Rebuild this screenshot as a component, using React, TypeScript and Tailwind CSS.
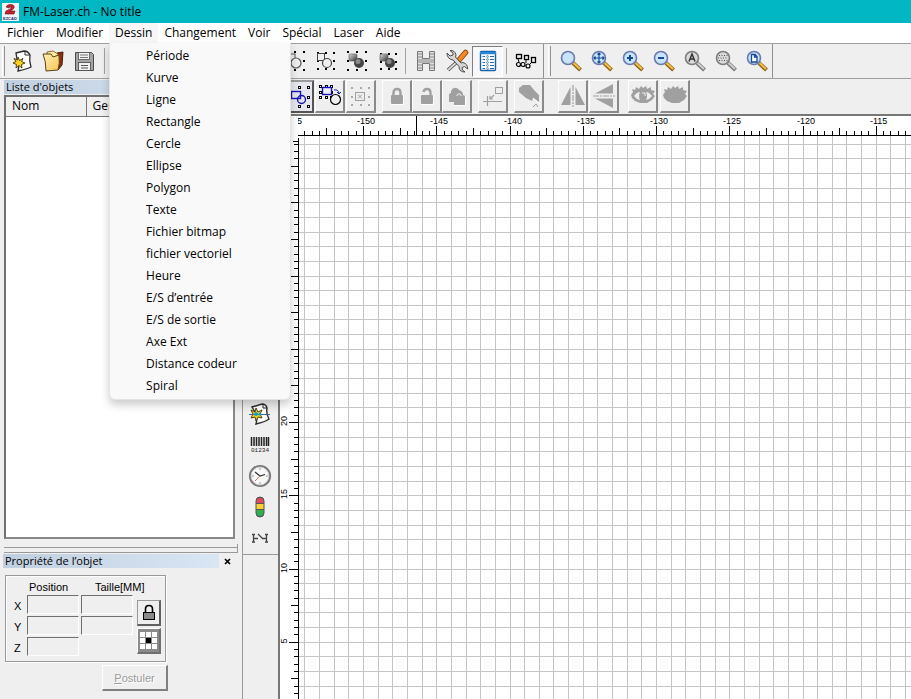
import React, { useEffect, useState } from 'react'

const menus = ['Fichier', 'Modifier', 'Dessin', 'Changement', 'Voir', 'Spécial', 'Laser', 'Aide']

const drawItems = [
  'Période', 'Kurve', 'Ligne', 'Rectangle', 'Cercle', 'Ellipse', 'Polygon', 'Texte',
  'Fichier bitmap', 'fichier vectoriel', 'Heure', 'E/S d’entrée', 'E/S de sortie',
  'Axe Ext', 'Distance codeur', 'Spiral',
]

type Kids = { children?: React.ReactNode }

function Icon({ children, size = 24 }: Kids & { size?: number }) {
  return (
    <svg width={size} height={size} viewBox={`0 0 ${size} ${size}`} fill="none" aria-hidden="true" className="shrink-0">
      {children}
    </svg>
  )
}

/* ---------- toolbar icons ---------- */

function NewIcon() {
  return (
    <Icon>
      <path d="M6 4 L14 2 Q18 2 20 6 Q19 12 21 18 Q17 20 8 22 Q10 15 7 10 Z" fill="#fff" stroke="#2b2b2b" strokeWidth="1.3" />
      <path d="M15 2 L15 6 L20 6" stroke="#2b2b2b" />
      <path d="M8 8 L9.500 11.500 L13 9.500 L11.500 12.500 L15 14 L11.500 15.500 L12 19 L9 16.500 L6 19 L6.500 15.500 L3 14 L6 12.500 L4 9.500 L7.500 11 Z" fill="#ffd21f" stroke="#40340a" strokeWidth="0.9" />
    </Icon>
  )
}

function FolderIcon() {
  return (
    <Icon>
      <defs>
        <linearGradient id="folder" x1="0" y1="0" x2="1" y2="1">
          <stop offset="0" stopColor="#fff0b8" />
          <stop offset="1" stopColor="#f5c455" />
        </linearGradient>
      </defs>
      <path d="M16 4 L22 3 L21 16 L17 21 Z" fill="#8a2f10" stroke="#4a1a08" />
      <path d="M6 3 L12 2 L17 5 L18 14 L16 20 L6 18 Z" fill="#ffe9a0" stroke="#6b4a10" strokeWidth="0.8" />
      <path d="M2 5 L10 5 L12 8 L18 6 Q19 15 17 21 L5 22 Q5 12 2 5 Z" fill="url(#folder)" stroke="#5b4313" />
    </Icon>
  )
}

function SaveIcon() {
  return (
    <Icon>
      <path d="M3.500 3.500 H19.500 L21.500 5.500 V21.500 H3.500 Z" fill="#a4a4a4" stroke="#4a4a4a" />
      <rect x="6.500" y="3.500" width="11" height="7" fill="#f3f3f3" stroke="#555" strokeWidth="0.8" />
      <path d="M8 6 H16 M8 8.500 H16" stroke="#777" />
      <rect x="6.500" y="13.500" width="12" height="8" fill="#f2f2f2" stroke="#444" strokeWidth="0.8" />
      <path d="M9 16.500 H16 M9 19 H16" stroke="#555" strokeWidth="1.2" />
    </Icon>
  )
}

function Dots({ color = '#000', a = 2, b = 20, hollow = false }: { color?: string; a?: number; b?: number; hollow?: boolean }) {
  const mid = Math.round((a + b) / 2)
  const spots = [[a, a], [mid, a], [b, a], [a, mid], [b, mid], [a, b], [mid, b], [b, b]]
  return (
    <>
      {spots.map(([x, y]) => (
        <g key={`${x}-${y}`}>
          <rect x={x} y={y} width={hollow ? 3 : 2} height={hollow ? 3 : 2} fill={color} />
          {hollow && <rect x={x + 1} y={y + 1} width="1" height="1" fill="#fff" />}
        </g>
      ))}
    </>
  )
}

function SelectIcon() {
  return (
    <Icon>
      <Dots a={2} b={20} />
      <rect x="4" y="5" width="8" height="7" stroke="#555" />
      <circle cx="13" cy="14" r="5" fill="#efefef" stroke="#555" strokeWidth="1.2" />
    </Icon>
  )
}

function GroupIcon() {
  return (
    <Icon>
      <Dots a={3} b={19} />
      <rect x="3.500" y="4.500" width="7" height="7" fill="#efefef" stroke="#444" />
      <circle cx="13" cy="14" r="4.500" fill="#efefef" stroke="#444" strokeWidth="1.2" />
    </Icon>
  )
}

function CombineIcon({ small = false }: { small?: boolean }) {
  return (
    <Icon>
      <defs>
        <linearGradient id="metal" x1="0" y1="0" x2="1" y2="1">
          <stop offset="0" stopColor="#ddd" />
          <stop offset="1" stopColor="#333" />
        </linearGradient>
      </defs>
      <Dots a={small ? 4 : 2} b={small ? 19 : 20} />
      <rect x="4" y="5" width="8" height="7" rx="1" fill="url(#metal)" stroke="#555" strokeWidth="0.6" />
      <circle cx="14" cy="14" r="5" fill="#444" />
      <circle cx="13" cy="12.500" r="2.500" fill="#8c8c8c" />
    </Icon>
  )
}

function HatchIcon() {
  return (
    <Icon>
      <path d="M3.500 2.500 H8.500 V9.500 H15.500 V2.500 H20.500 V21.500 H15.500 V14.500 H8.500 V21.500 H3.500 Z" fill="#e0e0e0" stroke="#777" />
      <path d="M4 5 H8 M4 8 H8 M4 11 H20 M4 13 H20 M4 16 H8 M4 19 H8 M16 5 H20 M16 8 H20 M16 16 H20 M16 19 H20" stroke="#888" />
    </Icon>
  )
}

function ToolsIcon() {
  return (
    <Icon>
      <path d="M3 21 L13 12" stroke="#444" strokeWidth="3.500" />
      <path d="M3 21 L13 12" stroke="#ddd" strokeWidth="1.800" />
      <path d="M14.500 10.500 L20.500 3.500" stroke="#8a3c00" strokeWidth="5.500" strokeLinecap="round" />
      <path d="M14.500 10.500 L20.500 3.500" stroke="#f08a24" strokeWidth="4" strokeLinecap="round" />
      <path d="M2 4 L5 7 L8 6 L8 4 L5 1.500 Q10 1 11 6 L10.500 8 L16 14 L18 13.500 Q23 15 22.500 20 L19.500 17.500 L17 18.500 L17.500 21 L20 23 Q14 23 14 17.500 L8 11 Q2 10 2 4 Z" fill="#d6d6d6" stroke="#3d3d3d" strokeWidth="0.9" />
    </Icon>
  )
}

function ListIcon() {
  return (
    <Icon>
      <rect x="4.500" y="2.500" width="15" height="19" rx="1" fill="#fff" stroke="#1462a8" strokeWidth="1.4" />
      <path d="M4 4 H20" stroke="#2a86d8" strokeWidth="2.500" />
      {[7, 10, 13, 16, 19].map((y) => (
        <g key={y}>
          <path d={`M6.500 ${y + 0.5} H9 M14 ${y + 0.5} H18`} stroke="#2468a8" />
          <circle cx="11.500" cy={y + 0.5} r="0.900" stroke="#2468a8" strokeWidth="0.7" />
        </g>
      ))}
    </Icon>
  )
}

function NodesIcon() {
  return (
    <Icon>
      <rect x="2.500" y="5.500" width="5" height="4" stroke="#000" strokeWidth="1.3" />
      <rect x="10.500" y="6.500" width="4" height="4" stroke="#000" strokeWidth="1.3" />
      <rect x="17.500" y="8.500" width="4" height="5" stroke="#000" strokeWidth="1.3" />
      <path d="M4 10 L5 13 M12 11 V14 M17 14 L15 16" stroke="#000" />
      <circle cx="4.500" cy="15.500" r="2" stroke="#000" strokeWidth="1.2" />
      <circle cx="9" cy="15.500" r="2" stroke="#000" strokeWidth="1.2" />
      <circle cx="14" cy="17" r="2" stroke="#000" strokeWidth="1.2" />
    </Icon>
  )
}

function Lens({ children, gray = false }: Kids & { gray?: boolean }) {
  return (
    <Icon>
      <path d="M14 14 L21.500 21" stroke={gray ? '#777' : '#8a6418'} strokeWidth="4" />
      <path d="M14.500 14 L21 20" stroke={gray ? '#cfcfcf' : '#f3c04a'} strokeWidth="2" />
      <circle cx="9" cy="9" r="6.500" fill={gray ? '#dadada' : '#c9e3fb'} stroke={gray ? '#7d7d7d' : '#6a7ab0'} strokeWidth="1.600" />
      {children}
    </Icon>
  )
}

/* ---------- icons of the second toolbar ---------- */

function FrameIcon() {
  return (
    <Icon>
      <Dots hollow a={1} b={20} />
      <rect x="4.500" y="6.500" width="9" height="7" stroke="#1414b4" strokeWidth="1.400" />
      <circle cx="14.500" cy="14.500" r="4" stroke="#1414b4" strokeWidth="1.400" />
    </Icon>
  )
}

function RotateFrameIcon() {
  return (
    <Icon>
      <Dots hollow a={1} b={12} />
      <rect x="4.500" y="3.500" width="9" height="7" fill="#efefef" stroke="#1414b4" strokeWidth="1.400" />
      <path d="M16 6 Q20 5 21 9 M19 8 L21 10 L23 8" stroke="#1414b4" />
      <circle cx="17.500" cy="15.500" r="5" fill="#efefef" stroke="#000" strokeWidth="1.200" />
    </Icon>
  )
}

function EraseFrameIcon() {
  return (
    <Icon>
      <g transform="translate(-1 0)">
        <Dots color="#a8a8a8" a={3} b={20} />
        <rect x="7.500" y="8.500" width="9" height="8" stroke="#a0a0a0" />
        <path d="M10 10.500 L14 14.500 M14 10.500 L10 14.500" stroke="#a0a0a0" />
      </g>
    </Icon>
  )
}

function GrayLock({ open = false }: { open?: boolean }) {
  return (
    <Icon>
      <rect x="6" y="11" width="12" height="9" rx="1" fill="#a0a0a0" />
      <path d={open ? 'M8.500 8 Q9 5 12 5 Q15.500 5 15.500 9 V12' : 'M8.500 12 V9 Q8.500 5 12 5 Q15.500 5 15.500 9 V12'} stroke="#a0a0a0" strokeWidth="2.400" />
      <path d="M18.500 11 V20.500 H6" stroke="#fff" />
    </Icon>
  )
}

function GrayLocks() {
  return (
    <Icon>
      <path d="M4 10 L6 9 V7 Q8 3 11 4 Q13 4 14 6 Q18 7 18 11 L20 12 V21 H9 V18 H4 Z" fill="#a0a0a0" />
      <path d="M12 12 V11 Q14 8 16 11 V12" stroke="#efefef" />
      <path d="M20.500 12 V21.500 H9" stroke="#fff" />
    </Icon>
  )
}

function OriginIcon() {
  return (
    <Icon>
      <rect x="14.500" y="3.500" width="7" height="6" stroke="#a0a0a0" />
      <path d="M2 17.500 H21 M6.500 12 V22 M13 11 L9 15 M9 12 V15 H12" stroke="#a0a0a0" strokeWidth="1.200" />
    </Icon>
  )
}

function PutIcon() {
  return (
    <Icon>
      <path d="M2 4 L6 1 H13 L17 6 L22 11 V18 L16 14 L15 17 L9 14 L2 8 Z" fill="#a0a0a0" />
      <path d="M16 14 L23 20" stroke="#fff" />
      <path d="M16 23 L19 20 L21 23" stroke="#a0a0a0" />
    </Icon>
  )
}

function MirrorIcon({ vertical = false }: { vertical?: boolean }) {
  return (
    <Icon>
      <g transform={vertical ? 'rotate(-90 12 12)' : undefined}>
        <path d="M9.500 3 V21 H0 Z M14.500 3 V21 H24 Z" fill="#a0a0a0" />
        <path d="M12 1 V23" stroke="#a0a0a0" strokeWidth="1.200" strokeDasharray="6 1 2 1" />
      </g>
    </Icon>
  )
}

function EyeIcon({ closed = false }: { closed?: boolean }) {
  return (
    <Icon>
      <path d="M0 11 L2 8 L1 5 L4 6 L5 3 L8 5 L10 2 L12 4 L15 2 L16 5 L20 3 L20 6 L24 7 L22 10 L24 12 L21 16 L16 19 L9 19 L4 17 L1 14 Z" fill="#a0a0a0" />
      {!closed && (
        <>
          <path d="M3 12 Q6 8 9 8 Q7 12 9 16 Q5 15 3 12 Z M21 12 Q18 8 15 8 Q17 12 15 16 Q19 15 21 12 Z" fill="#efefef" />
          <path d="M11 9 H14 V12" stroke="#efefef" />
        </>
      )}
    </Icon>
  )
}

/* ---------- side toolbar icons ---------- */

function VectorIcon() {
  return (
    <Icon>
      <path d="M4 5 L14 2 Q18 2 19 6 Q18 12 21 17 Q17 20 8 22 Q10 15 7 10 Z" fill="#fff" stroke="#2b2b2b" strokeWidth="1.400" />
      <path d="M15 2 L15 6 L19 6" stroke="#2b2b2b" />
      <path d="M8 6 L10 10 L14 8 L12 12 L14 16 L10 15 L8 19 L7 15 L3 16 L5 12 L3 8 L7 10 Z" fill="#ffd21f" stroke="#40340a" strokeWidth="0.900" />
      <path d="M1 12.500 H22" stroke="#3a6a90" />
      <circle cx="8" cy="12" r="2" fill="#1ca0b8" />
      <circle cx="12" cy="12" r="1.500" fill="#1ca0b8" />
    </Icon>
  )
}

function BarcodeIcon() {
  return (
    <Icon>
      <path d="M3.500 4 V13 M6 4 V13 M8.500 4 V13 M11 4 V13 M13.500 4 V13 M16 4 V13 M18.500 4 V13 M20.500 4 V13" stroke="#222" strokeWidth="1.500" />
      <text x="3" y="19" fontSize="6" fill="#222" fontFamily="Liberation Mono, monospace">01234</text>
    </Icon>
  )
}

function ClockIcon() {
  return (
    <Icon>
      <circle cx="12" cy="12" r="10" fill="#f8f8f8" stroke="#777" strokeWidth="2.200" />
      <circle cx="12" cy="12" r="9" stroke="#ccc" strokeWidth="0.800" />
      <path d="M7 8 L12 12 L17 10.500" stroke="#333" strokeWidth="1.200" />
      <path d="M12 12 L7 17" stroke="#e07070" />
      <path d="M12 4 V6 M12 18 V20 M4 12 H6 M18 12 H20" stroke="#999" />
    </Icon>
  )
}

function TrafficIcon() {
  return (
    <Icon>
      <rect x="8" y="2" width="8" height="20" rx="4" fill="#555" stroke="#555" />
      <path d="M8.500 8 V6 Q8.500 3 12 3 Q15.500 3 15.500 6 V8 Z" fill="#e0485c" />
      <rect x="8.500" y="9" width="7" height="5" fill="#fbd12e" />
      <path d="M8.500 15 V18 Q8.500 21 12 21 Q15.500 21 15.500 18 V15 Z" fill="#2fae52" />
    </Icon>
  )
}

function AxisIcon() {
  return (
    <Icon>
      <path d="M5.500 8 V16 M18.500 8 V16 M4 8.500 H7 M4 16 H7 M17 8.500 H20 M17 16 H20 M6 12.500 H10 M14 12.500 H18 M10 8 L15 13" stroke="#444" strokeWidth="1.300" />
    </Icon>
  )
}

/* ---------- toolbar parts ---------- */

function FlatButton({ label, active, children }: Kids & { label: string; active?: boolean }) {
  return (
    <button
      aria-label={label}
      className={
        active
          ? 'flex h-[31px] w-[31px] items-center justify-center border border-t-[#808080] border-l-[#808080] border-r-white border-b-white bg-[#f8f8f8]'
          : 'flex h-[31px] w-[31px] items-center justify-center'
      }
    >
      {children}
    </button>
  )
}

function RaisedButton({ label, pressed, children }: Kids & { label: string; pressed?: boolean }) {
  return (
    <button
      aria-label={label}
      className={
        pressed
          ? 'flex h-[33px] w-[30px] items-center justify-center border-2 border-t-[#9a9a9a] border-l-[#9a9a9a] border-r-[#555] border-b-[#555] bg-[#e6e6ee]'
          : 'flex h-[33px] w-[30px] items-center justify-center border-t border-l border-r-2 border-b-2 border-t-white border-l-white border-r-[#8a8a8a] border-b-[#8a8a8a]'
      }
    >
      {children}
    </button>
  )
}

function Grip() {
  return <div className="h-[30px] w-[3px] shrink-0 border-r border-l border-l-white border-r-[#909090]" />
}

function Divider() {
  return <div className="h-[26px] w-px shrink-0 bg-[#a0a0a0]" />
}

function MainToolbar() {
  return (
    <div role="toolbar" aria-label="Standard" className="flex h-9 shrink-0 items-center border-t border-b border-[#a0a0a0] bg-[#efefef]">
      <div className="flex items-center pl-[2px]">
        <Grip />
        <div className="flex items-center pl-px">
          <FlatButton label="Nouveau"><NewIcon /></FlatButton>
          <FlatButton label="Ouvrir"><FolderIcon /></FlatButton>
          <FlatButton label="Enregistrer"><SaveIcon /></FlatButton>
        </div>
      </div>
      <div className="flex w-[180px] items-center pl-[5px]"><Divider /></div>
      <div className="flex items-center">
        <FlatButton label="Sélection"><SelectIcon /></FlatButton>
        <FlatButton label="Grouper"><GroupIcon /></FlatButton>
        <FlatButton label="Combiner"><CombineIcon /></FlatButton>
        <FlatButton label="Union"><CombineIcon small /></FlatButton>
      </div>
      <div className="flex items-center pl-[2px]">
        <Divider />
        <div className="flex items-center pl-1">
          <FlatButton label="Hachure"><HatchIcon /></FlatButton>
          <FlatButton label="Paramètres"><ToolsIcon /></FlatButton>
          <FlatButton label="Liste d'objets" active><ListIcon /></FlatButton>
        </div>
      </div>
      <div className="flex items-center pl-[3px]">
        <Divider />
        <div className="flex items-center pl-[3px]">
          <FlatButton label="Noeuds"><NodesIcon /></FlatButton>
        </div>
      </div>
      <div className="flex h-full items-center gap-1 border-r border-[#909090] pl-[2px]">
        <div className="h-full w-px bg-[#909090]" />
        <Grip />
        <div className="flex items-center">
          <FlatButton label="Zoom fenêtre"><Lens /></FlatButton>
          <FlatButton label="Déplacer">
            <Lens><path d="M9 4 V14 M4 9 H14 M7.500 5.500 L9 4 L10.500 5.500 M7.500 12.500 L9 14 L10.500 12.500 M5.500 7.500 L4 9 L5.500 10.500 M12.500 7.500 L14 9 L12.500 10.500" stroke="#164a90" strokeWidth="1.200" /></Lens>
          </FlatButton>
          <FlatButton label="Zoom avant"><Lens><path d="M9 6 V12 M6 9 H12" stroke="#164a90" strokeWidth="2" /></Lens></FlatButton>
          <FlatButton label="Zoom arrière"><Lens><path d="M6 9 H12" stroke="#164a90" strokeWidth="2" /></Lens></FlatButton>
          <FlatButton label="Zoom tout"><Lens gray><path d="M6 12.500 L9 5 L12 12.500 M7 10 H11" stroke="#333" strokeWidth="1.500" /></Lens></FlatButton>
          <FlatButton label="Zoom sélection">
            <Lens gray><path d="M5 6.500 H14 M4 9 H14 M5 11.500 H14" stroke="#555" strokeDasharray="1 1.500" /></Lens>
          </FlatButton>
          <FlatButton label="Zoom page"><Lens><path d="M6.500 5.500 H10 L12 7.500 V13 H6.500 Z M9.500 5.500 V8 H12" fill="#fff" stroke="#164a90" strokeWidth="1.300" /></Lens></FlatButton>
        </div>
      </div>
    </div>
  )
}

function EditToolbar() {
  return (
    <div role="toolbar" aria-label="Édition" className="flex h-[37px] shrink-0 items-start gap-[6px] border-b-2 border-[#777] bg-[#efefef] pt-px pl-[42px]">
      <div className="flex gap-px">
        <RaisedButton label="Cadre" pressed><FrameIcon /></RaisedButton>
        <RaisedButton label="Rotation"><RotateFrameIcon /></RaisedButton>
        <RaisedButton label="Effacer"><EraseFrameIcon /></RaisedButton>
      </div>
      <div className="flex">
        <RaisedButton label="Verrouiller"><GrayLock /></RaisedButton>
        <RaisedButton label="Déverrouiller"><GrayLock open /></RaisedButton>
        <RaisedButton label="Tout déverrouiller"><GrayLocks /></RaisedButton>
      </div>
      <RaisedButton label="Origine"><OriginIcon /></RaisedButton>
      <RaisedButton label="Placer"><PutIcon /></RaisedButton>
      <div className="flex gap-px pl-2">
        <RaisedButton label="Miroir horizontal"><MirrorIcon /></RaisedButton>
        <RaisedButton label="Miroir vertical"><MirrorIcon vertical /></RaisedButton>
      </div>
      <div className="flex gap-[2px] pl-[3px]">
        <RaisedButton label="Afficher"><EyeIcon /></RaisedButton>
        <RaisedButton label="Masquer"><EyeIcon closed /></RaisedButton>
      </div>
    </div>
  )
}

/* ---------- left dock ---------- */

function PanelTitle({ children }: Kids) {
  return (
    <h2 className="h-[14px] flex-1 bg-gradient-to-r from-[#c0cfdf] to-[#d9e6f4] pl-[2px] font-['Open_Sans'] text-[11px] leading-[13px]">{children}</h2>
  )
}

function ObjectList() {
  return (
    <section className="flex h-[465px] shrink-0 flex-col pt-px pr-[7px] pb-[5px] pl-1">
      <div className="flex"><PanelTitle>Liste d'objets</PanelTitle></div>
      <div className="mt-px flex-1 border-2 border-t-[#707070] border-l-[#707070] border-r-[#888] border-b-[#888] bg-white">
        <table className="w-full table-fixed text-left">
          <thead>
            <tr className="h-[19px] bg-[#f0f0f0] text-[12px] leading-4">
              <th className="w-20 border-r border-b border-[#777] pl-[6px] font-normal">Nom</th>
              <th className="w-20 border-r border-b border-[#777] pl-[6px] font-normal">Genre</th>
              <th className="border-b border-[#777]" />
            </tr>
          </thead>
        </table>
      </div>
    </section>
  )
}

function SizeField({ label }: { label: string }) {
  return (
    <input
      aria-label={label}
      className="h-[19px] w-[52px] border border-t-[#707070] border-l-[#707070] border-r-white border-b-white bg-[#efefef] px-1 outline-none"
    />
  )
}

function PropertyPanel() {
  return (
    <section className="flex flex-1 flex-col font-['Liberation_Sans'] text-[11px] leading-[14px]">
      <div className="flex items-center pt-px pr-[7px] pl-[3px]">
        <PanelTitle>Propriété de l’objet</PanelTitle>
        <button aria-label="Fermer" className="flex w-4 items-center justify-center">
          <svg width="7" height="7" viewBox="0 0 7 7"><path d="M1 1 L6 6 M6 1 L1 6" stroke="#000" strokeWidth="1.700" /></svg>
        </button>
      </div>
      <div className="w-[168px] pt-[7px] pl-[5px]">
        <div className="flex h-[87px] w-[161px] gap-1 border border-[#999] pl-[7px] shadow-[inset_1px_1px_0_#fff,1px_1px_0_#fff]">
          <div className="grid grid-cols-[12px_52px_52px] grid-rows-[17px_19px_19px_19px] gap-x-[2px] gap-y-[2px]">
            <span />
            <span className="pt-1 pl-[2px]">Position</span>
            <span className="pt-1 pl-[14px]">Taille[MM]</span>
            <span className="pt-1 pl-px">X</span>
            <SizeField label="Position X" />
            <SizeField label="Taille X" />
            <span className="pt-1 pl-px">Y</span>
            <SizeField label="Position Y" />
            <SizeField label="Taille Y" />
            <span className="pt-1 pl-px">Z</span>
            <SizeField label="Position Z" />
          </div>
          <div className="flex flex-col gap-[2px] pt-6">
            <button aria-label="Verrouiller les proportions" className="flex h-[26px] w-6 items-center justify-center border-t border-l border-r-2 border-b-2 border-t-[#999] border-l-[#999] border-r-[#606060] border-b-[#606060]">
              <svg width="14" height="18" viewBox="0 0 14 18" fill="none">
                <path d="M3.500 9 V5 Q3.500 1.500 7 1.500 Q10.500 1.500 10.500 5 V9" stroke="#000" strokeWidth="1.600" />
                <rect x="1.500" y="8.500" width="11" height="7" fill="#888" stroke="#000" />
              </svg>
            </button>
            <button aria-label="Point d'ancrage" className="flex h-[26px] w-6 items-center justify-center border-t border-l border-r-2 border-b-2 border-[#707070] border-t-white border-l-white bg-[#8a8a8a]">
              <span className="grid grid-cols-3 gap-px">
                {Array.from({ length: 9 }, (_, i) => (
                  <span key={i} className={i === 4 ? 'h-[5px] w-[5px] bg-black' : 'h-[5px] w-[5px] bg-white'} />
                ))}
              </span>
            </button>
          </div>
        </div>
        <div className="flex justify-end pt-[3px]">
          <button disabled className="h-[26px] w-[66px] border-t border-l border-r-2 border-b-2 border-[#808080] border-t-white border-l-white text-[11px] text-[#9a9a9a] [text-shadow:1px_1px_0_#fff]">
            <span className="underline">P</span>ostuler
          </button>
        </div>
      </div>
    </section>
  )
}

function LeftDock() {
  return (
    <aside className="flex w-[242px] shrink-0 flex-col bg-[#efefef]">
      <ObjectList />
      <div className="h-[9px] shrink-0 pr-1 pl-1">
        <div className="h-[9px] border-r border-b border-[#999]">
          <div className="h-1 border-b border-[#999]" />
        </div>
      </div>
      <PropertyPanel />
    </aside>
  )
}

function SideTools() {
  return (
    <div className="w-9 shrink-0 border-l border-[#999] bg-[#efefef]">
      <div className="flex h-[439px] flex-col items-center justify-end border-b border-[#999] pr-px pb-px">
        <FlatButton label="Fichier vectoriel"><VectorIcon /></FlatButton>
        <FlatButton label="Code-barres"><BarcodeIcon /></FlatButton>
        <FlatButton label="Heure"><ClockIcon /></FlatButton>
        <FlatButton label="Entrées et sorties"><TrafficIcon /></FlatButton>
        <FlatButton label="Axe externe"><AxisIcon /></FlatButton>
      </div>
    </div>
  )
}

/* ---------- work area: rulers and grid ---------- */

const LEFT = 19
const TOP = 20
const STEP = 14.65

// tick length depends on its place inside a span of five units
function tickLength(i: number) {
  if (i % 10 === 0) return 10
  return i % 5 === 0 ? 8 : 5
}

const tx = (i: number) => Math.round(83 + (i * STEP) / 2)
const ty = (i: number) => Math.round(306 + (i * STEP) / 2)

function useAreaSize() {
  const read = () => ({ width: window.innerWidth - 280, height: window.innerHeight - 116 })
  const [size, setSize] = useState(read)
  useEffect(() => {
    const onResize = () => setSize(read())
    window.addEventListener('resize', onResize)
    return () => window.removeEventListener('resize', onResize)
  }, [])
  return size
}

function WorkArea() {
  const { width, height } = useAreaSize()
  const xTicks = Array.from({ length: 600 }, (_, k) => k - 10).filter((i) => tx(i) < width)
  const yTicks = Array.from({ length: 400 }, (_, k) => k - 40).filter((i) => ty(i) > TOP && ty(i) < height)

  return (
    <main className="min-w-0 flex-1 overflow-hidden border-l-2 border-[#777] bg-white">
      <svg width="100%" height="100%" shapeRendering="crispEdges" className="block" fontFamily="Liberation Sans, sans-serif" fontSize="9">
        <g fill="#c4c4c4">
          {xTicks.filter((i) => i % 2 === 0 && tx(i) > LEFT).map((i) => (
            <rect key={i} x={tx(i)} y={TOP} width="1" height="100%" />
          ))}
          {yTicks.filter((i) => i % 2 === 0).map((i) => (
            <rect key={i} x={LEFT} y={ty(i)} width="100%" height="1" />
          ))}
        </g>
        {xTicks.filter((i) => i % 10 === 0 && tx(i) < width - 12).map((i) => (
          <text key={i} x={tx(i) - 6} y="8">{-150 + i / 2}</text>
        ))}
        {/* corner between the rulers */}
        <rect width={LEFT - 1} height={TOP} fill="#fff" />
        <rect x={LEFT - 1} y={TOP - 1} width="100%" height="1" />
        <rect x={LEFT - 1} y={TOP + 2} width="1" height="100%" />
        {xTicks.filter((i) => tx(i) > LEFT).map((i) => (
          <rect key={i} x={tx(i)} y={TOP - tickLength(i)} width="1" height={tickLength(i)} />
        ))}
        {yTicks.map((i) => (
          <rect key={i} x={LEFT - tickLength(i)} y={ty(i)} width={tickLength(i)} height="1" />
        ))}
        {yTicks.filter((i) => i % 10 === 0 && ty(i) < height - 6).map((i) => (
          <text key={i} textAnchor="middle" transform={`translate(7 ${ty(i) - 1}) rotate(-90)`}>{20 - i / 2}</text>
        ))}
        {/* pointer marks */}
        <rect x="136" y="0" width="1" height={TOP} />
        <rect x="13" y="25" width="6" height="1" />
      </svg>
    </main>
  )
}

export default function App() {
  const [open, setOpen] = useState('Dessin')

  return (
    <div className="flex h-screen flex-col overflow-hidden bg-[#efefef] font-['Open_Sans',sans-serif] text-[12px] text-black">
      <header className="flex h-[23px] shrink-0 items-center gap-1 bg-[#00b7c3] pl-[2px]">
        <svg width="17" height="18" viewBox="0 0 17 18">
          <rect width="17" height="18" fill="#f4f4f8" />
          <path d="M4 4 Q5 1 9 1.500 Q13 2 12 5 Q11 7 8 8 L13 8 L12 11 H3 L4 8 Q9 6 9 4.500 Q8 3 7 5 Z" fill="#c8202c" stroke="#5a1014" strokeWidth="0.600" />
          <text x="1" y="17" fontSize="4" fontWeight="bold" fill="#20306a" fontFamily="Liberation Sans, sans-serif">EZCAD</text>
        </svg>
        <h1 className="text-[12px] leading-4">FM-Laser.ch - No title</h1>
      </header>

      <nav className="flex h-5 shrink-0 bg-white pl-px">
        {menus.map((name) => (
          <div key={name} className="relative">
            <button
              onClick={() => setOpen(open === name ? '' : name)}
              className={open === name ? 'h-5 bg-[#f7f7f7] px-[6px] leading-5' : 'h-5 px-[6px] leading-5'}
            >
              {name}
            </button>
            {name === 'Dessin' && open === name && (
              <ul className="absolute top-5 left-0 z-10 w-[182px] rounded-b-md border border-t-0 border-[#e4e4e4] bg-[#f9f9f9] py-[2px] shadow-[0_5px_8px_rgba(0,0,0,0.2)]">
                {drawItems.map((item) => (
                  <li key={item}>
                    <button className="block h-[22px] w-full pl-9 text-left leading-[22px]">{item}</button>
                  </li>
                ))}
              </ul>
            )}
          </div>
        ))}
      </nav>

      <MainToolbar />

      <div className="flex min-h-0 flex-1">
        <LeftDock />
        <div className="flex min-w-0 flex-1 flex-col">
          <EditToolbar />
          <div className="flex min-h-0 flex-1">
            <SideTools />
            <WorkArea />
          </div>
        </div>
      </div>
    </div>
  )
}
